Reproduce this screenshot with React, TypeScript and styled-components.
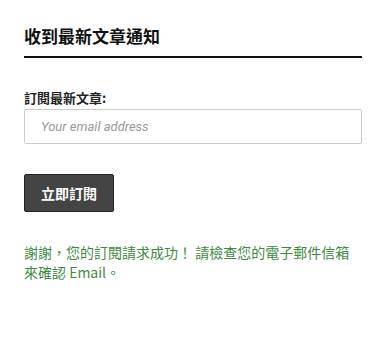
import styled, { createGlobalStyle } from "styled-components";

const GlobalStyle = createGlobalStyle`
  html, body {
    margin: 0;
    padding: 0;
    background: #ffffff;
  }
  body {
    font-family: "Noto Sans CJK TC", "Roboto", sans-serif;
  }
`;

const Widget = styled.section`
  width: 338px;
  padding: 24px 26px 0 24px;
`;

const Title = styled.h3`
  margin: 0;
  padding: 0 0 8px;
  font-size: 17px;
  line-height: 24px;
  font-weight: 700;
  color: #111;
  border-bottom: 2px solid #111;
`;

const Form = styled.form`
  display: flex;
  flex-direction: column;
  align-items: flex-start;
  margin-top: 31px;
`;

const Label = styled.label`
  font-size: 13px;
  line-height: 18px;
  font-weight: 700;
  color: #222;
  margin-bottom: 2px;
`;

const EmailInput = styled.input`
  box-sizing: border-box;
  width: 100%;
  height: 35px;
  padding: 0 16px;
  border: 1px solid #cccccc;
  border-radius: 2px;
  font-family: "Roboto", "Noto Sans CJK TC", sans-serif;
  font-size: 13px;
  color: #333;
  outline: none;

  &::placeholder {
    color: #999;
    font-style: italic;
  }
`;

const SubmitButton = styled.button`
  margin-top: 30px;
  width: 90px;
  height: 38px;
  background: #444444;
  border: 1px solid #222;
  border-radius: 2px;
  color: #fff;
  font-family: "Noto Sans CJK TC", sans-serif;
  font-size: 14px;
  font-weight: 700;
  cursor: pointer;
`;

const Success = styled.p`
  margin: 30px 0 0;
  font-size: 14px;
  line-height: 20px;
  color: #3d8b3d;
`;

export default function App() {
  return (
    <>
      <GlobalStyle />
      <Widget>
        <Title>收到最新文章通知</Title>
        <Form onSubmit={(e) => e.preventDefault()}>
          <Label htmlFor="email">訂閱最新文章:</Label>
          <EmailInput id="email" type="email" placeholder="Your email address" />
          <SubmitButton type="submit">立即訂閱</SubmitButton>
        </Form>
        <Success>
          謝謝，您的訂閱請求成功！ 請檢查您的電子郵件信箱來確認 Email。
        </Success>
      </Widget>
    </>
  );
}
